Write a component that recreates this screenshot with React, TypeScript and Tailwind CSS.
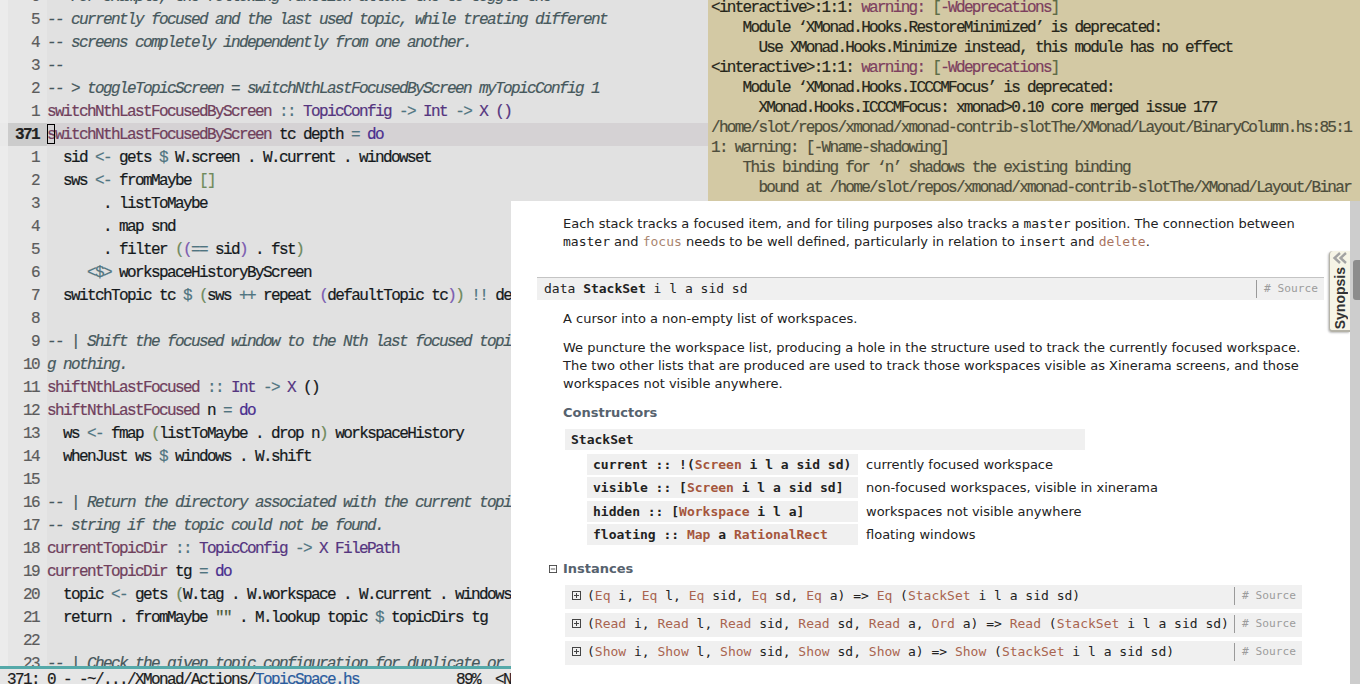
import React from "react";

// token styles for the editor
const C = "italic text-[#46585c]";
const F = "text-[#70405c]";
const T = "text-[#55357f]";
const K = "text-[#4a2f8f]";
const O = "text-[#4f7480]";
const G = "text-[#6f8a5c]";
const P = "text-[#7b5bb0]";
const D = "";

type Tok = [string, string];
type Line = { n: string; toks: Tok[]; current?: boolean };

const lines: Line[] = [
    { n: "6", toks: [["-- For example, the following function allows the to toggle the", C]] },
    { n: "5", toks: [["-- currently focused and the last used topic, while treating different", C]] },
    { n: "4", toks: [["-- screens completely independently from one another.", C]] },
    { n: "3", toks: [["--", C]] },
    { n: "2", toks: [["-- > toggleTopicScreen = switchNthLastFocusedByScreen myTopicConfig 1", C]] },
    { n: "1", toks: [["switchNthLastFocusedByScreen", F], [" :: ", O], ["TopicConfig", T], [" -> ", O], ["Int", T], [" -> ", O], ["X ()", T]] },
    { n: "371", current: true, toks: [["switchNthLastFocusedByScreen", F], [" tc depth ", D], ["=", O], [" ", D], ["do", K]] },
    { n: "1", toks: [["  sid ", D], ["<-", O], [" gets ", D], ["$", O], [" W.screen . W.current . windowset", D]] },
    { n: "2", toks: [["  sws ", D], ["<-", O], [" fromMaybe ", D], ["[]", G]] },
    { n: "3", toks: [["       . listToMaybe", D]] },
    { n: "4", toks: [["       . map snd", D]] },
    { n: "5", toks: [["       . filter ", D], ["(", G], ["(", P], ["== ", O], ["sid", D], [")", P], [" . fst", D], [")", G]] },
    { n: "6", toks: [["     ", D], ["<$>", O], [" workspaceHistoryByScreen", D]] },
    { n: "7", toks: [["  switchTopic tc ", D], ["$", O], [" ", D], ["(", G], ["sws ", D], ["++", O], [" repeat ", D], ["(", P], ["defaultTopic tc", D], [")", P], [")", G], [" ", D], ["!!", O], [" depth", D]] },
    { n: "8", toks: [] },
    { n: "9", toks: [["-- | Shift the focused window to the Nth last focused topic, or do", C]] },
    { n: "10", toks: [["g nothing.", C]] },
    { n: "11", toks: [["shiftNthLastFocused", F], [" :: ", O], ["Int", T], [" -> ", O], ["X ", T], ["()", D]] },
    { n: "12", toks: [["shiftNthLastFocused", F], [" n ", D], ["=", O], [" ", D], ["do", K]] },
    { n: "13", toks: [["  ws ", D], ["<-", O], [" fmap ", D], ["(", G], ["listToMaybe . drop n", D], [")", G], [" workspaceHistory", D]] },
    { n: "14", toks: [["  whenJust ws ", D], ["$", O], [" windows . W.shift", D]] },
    { n: "15", toks: [] },
    { n: "16", toks: [["-- | Return the directory associated with the current topic, or an empty", C]] },
    { n: "17", toks: [["-- string if the topic could not be found.", C]] },
    { n: "18", toks: [["currentTopicDir", F], [" :: ", O], ["TopicConfig", T], [" -> ", O], ["X ", T], ["FilePath", T]] },
    { n: "19", toks: [["currentTopicDir", F], [" tg ", D], ["=", O], [" ", D], ["do", K]] },
    { n: "20", toks: [["  topic ", D], ["<-", O], [" gets ", D], ["(", G], ["W.tag . W.workspace . W.current . windowset", D], [")", G]] },
    { n: "21", toks: [["  return . fromMaybe ", D], ['""', "text-[#4a5a3a]"], [" . M.lookup topic ", D], ["$", O], [" topicDirs tg", D]] },
    { n: "22", toks: [] },
    { n: "23", toks: [["-- | Check the given topic configuration for duplicate or", C]] },
];

const W = "text-[#7d3f5e]";
const Q = "text-[#5d6b45]";
const L = "text-[#4d4d3b]";

const ghci: Tok[][] = [
    [["<interactive>:1:1: ", D], ["warning:", W], [" ", D], ["[", Q], ["-Wdeprecations", W], ["]", Q]],
    [["    Module ‘XMonad.Hooks.RestoreMinimized’ is deprecated:", D]],
    [["      Use XMonad.Hooks.Minimize instead, this module has no effect", D]],
    [["<interactive>:1:1: ", D], ["warning:", W], [" ", D], ["[", Q], ["-Wdeprecations", W], ["]", Q]],
    [["    Module ‘XMonad.Hooks.ICCCMFocus’ is deprecated:", D]],
    [["      XMonad.Hooks.ICCCMFocus: xmonad>0.10 core merged issue 177", D]],
    [["/home/slot/repos/xmonad/xmonad-contrib-slotThe/XMonad/Layout/BinaryColumn.hs:85:1", L]],
    [["1: warning: [-Wname-shadowing]", L]],
    [["    This binding for ‘n’ shadows the existing binding", L]],
    [["      bound at /home/slot/repos/xmonad/xmonad-contrib-slotThe/XMonad/Layout/Binar", L]],
];

const Toks = ({ toks }: { toks: Tok[] }) => (
    <>
        {toks.map(([text, cls], i) => (
            <span key={i} className={cls}>
                {text}
            </span>
        ))}
    </>
);

const CodeRow = ({ line }: { line: Line }) => (
    <div className={`relative flex h-[23px] items-center ${line.current ? "bg-[#d5d2d4]" : ""}`}>
        <div className={`h-full w-[8px] shrink-0 ${line.current ? "bg-[#e9e9e9]" : ""}`} />
        <div
            className={`flex h-full w-[39px] shrink-0 items-center justify-end pr-[8px] ${
                line.current ? "bg-[#cccccc] font-bold text-[#222]" : "text-[#5c5c5c]"
            }`}
        >
            {line.n}
        </div>
        <div className="whitespace-pre text-[#15191c]">
            <Toks toks={line.toks} />
        </div>
        {line.current && <div className="absolute top-[1px] left-[47px] h-[20px] w-[8px] border border-black" />}
    </div>
);

const Source = () => (
    <div className="flex h-[18px] items-center border-l border-[#9a9a9a] pr-[6px] pl-[7px] font-['DejaVu_Sans_Mono',monospace] text-[11.2px] text-[#9c9c9c]">
        # Source
    </div>
);

const Mono = "font-['DejaVu_Sans_Mono',monospace] text-[13px] whitespace-pre";
const TL = "text-[#a5563c]";
const TI = "text-[#a9644f]";

const fields: { toks: Tok[]; doc: string; extra: string }[] = [
    { toks: [["current :: !(", D], ["Screen", TL], [" i l a sid sd)", D]], doc: "currently focused workspace", extra: "" },
    { toks: [["visible :: [", D], ["Screen", TL], [" i l a sid sd]", D]], doc: "non-focused workspaces, visible in xinerama", extra: "" },
    { toks: [["hidden :: [", D], ["Workspace", TL], [" i l a]", D]], doc: "workspaces not visible anywhere", extra: "mt-[1px]" },
    { toks: [["floating :: ", D], ["Map", TL], [" a ", D], ["RationalRect", TL]], doc: "floating windows", extra: "" },
];

const inst = (c: string, last: Tok[]): Tok[] => [
    ["(", D], [c, TI], [" i, ", D], [c, TI], [" l, ", D], [c, TI], [" sid, ", D], [c, TI], [" sd, ", D], [c, TI], [" a", D], ...last,
];

const instances: Tok[][] = [
    [...inst("Eq", []), [") => ", D], ["Eq", TI], [" (", D], ["StackSet", TI], [" i l a sid sd)", D]],
    [...inst("Read", [[", ", D], ["Ord", TI], [" a", D]]), [") => ", D], ["Read", TI], [" (", D], ["StackSet", TI], [" i l a sid sd)", D]],
    [...inst("Show", []), [") => ", D], ["Show", TI], [" (", D], ["StackSet", TI], [" i l a sid sd)", D]],
];

const Box = ({ plus, className }: { plus?: boolean; className: string }) => (
    <svg viewBox="0 0 9 9" className={className} fill="none" stroke="#444" strokeWidth="1">
        <rect x="0.5" y="0.5" width="8" height="8" />
        <path d="M2 4.5h5" />
        {plus && <path d="M4.5 2v5" />}
    </svg>
);

const M = ({ children }: { children: React.ReactNode }) => (
    <span className="font-['DejaVu_Sans_Mono',monospace] text-[13px]">{children}</span>
);

const App: React.FC = () => {
    return (
        <div className="relative h-[684px] w-[1360px] overflow-hidden bg-[#e1e1e1] font-['Liberation_Mono',monospace] text-[16px] tracking-[-1.6px] [-webkit-text-stroke:0.2px]">
            {/* emacs */}
            <div className="absolute top-0 left-0 flex h-[684px] w-[708px] flex-col bg-[#e1e1e1]">
                <div className="relative flex-1 overflow-hidden bg-[linear-gradient(to_right,#ececec_0,#ececec_8px,#e6e6e6_8px,#e6e6e6_47px,#e1e1e1_47px)]">
                    <div className="-mt-[15px] flex flex-col">
                        {lines.map((line, i) => (
                            <CodeRow key={i} line={line} />
                        ))}
                    </div>
                </div>
                <div className="h-[18px] shrink-0 overflow-hidden border-t-[3px] border-[#55a9a9] bg-[#e6e6e6]">
                    <div className="mt-[1px] flex h-[20px] w-[511px] items-center whitespace-pre pl-[7px] text-[#1c1c1c]">
                        <span>371: 0 - -~/.../XMonad/Actions/</span>
                        <span className="text-[#2b5c9e]">TopicSpace.hs</span>
                        <span className="ml-auto">89%</span>
                        <span className="ml-[15px]">{"<N"}</span>
                    </div>
                </div>
            </div>

            {/* ghci */}
            <div className="absolute top-0 left-[708px] flex h-[201px] w-[652px] flex-col overflow-hidden bg-[#d3c9a4] pl-[3px] text-[#26261a] tracking-[-1.7px]">
                <div className="-mt-[2px] flex flex-col">
                    {ghci.map((toks, i) => (
                        <div key={i} className="flex h-[20px] items-center whitespace-pre">
                            <Toks toks={toks} />
                        </div>
                    ))}
                </div>
            </div>

            {/* haddock page */}
            <div className="absolute top-[201px] left-[511px] flex h-[483px] w-[839px] flex-col bg-white font-['DejaVu_Sans',sans-serif] text-[13px] leading-[18px] tracking-normal text-[#222] [-webkit-text-stroke:0px]">
                <div className="mt-[14px] ml-[52px] whitespace-nowrap">
                    <div>
                        Each stack tracks a focused item, and for tiling purposes also tracks a <M>master</M> position. The connection between
                    </div>
                    <div>
                        <M>master</M> and <M><span className="text-[#a9846f]">focus</span></M> needs to be well defined, particularly in relation to <M>insert</M> and{" "}
                        <M><span className="text-[#a9745f]">delete</span></M>.
                    </div>
                </div>

                <div className="mt-[26px] ml-[26px] flex h-[23px] w-[787px] items-center border-t border-[#c4c4c4] bg-[#f0f0f0] pl-[7px]">
                    <span className={Mono}>
                        data <b>StackSet</b> i l a sid sd
                    </span>
                    <div className="ml-auto">
                        <Source />
                    </div>
                </div>

                <div className="mt-[10px] ml-[52px]">A cursor into a non-empty list of workspaces.</div>

                <div className="mt-[11px] ml-[52px] whitespace-nowrap">
                    <div>We puncture the workspace list, producing a hole in the structure used to track the currently focused workspace.</div>
                    <div>The two other lists that are produced are used to track those workspaces visible as Xinerama screens, and those</div>
                    <div>workspaces not visible anywhere.</div>
                </div>

                <div className="mt-[11px] ml-[52px] font-bold text-[#56626e]">Constructors</div>

                <div className={`mt-[7px] ml-[54px] flex h-[21px] w-[520px] items-center bg-[#f0f0f0] pl-[6px] font-bold ${Mono}`}>StackSet</div>

                <div className="mt-[4px] ml-[76px] flex flex-col gap-[2px]">
                    {fields.map((f, i) => (
                        <div key={i} className={`flex h-[21px] items-center gap-[8px] ${f.extra}`}>
                            <div className={`flex h-full w-[271px] items-center bg-[#f0f0f0] pl-[6px] font-bold ${Mono}`}>
                                <Toks toks={f.toks} />
                            </div>
                            <div>{f.doc}</div>
                        </div>
                    ))}
                </div>

                <div className="mt-[15px] ml-[38px] flex items-center gap-[6px] font-bold text-[#56626e]">
                    <Box className="h-[8px] w-[8px]" />
                    Instances
                </div>

                <div className="mt-[7px] ml-[54px] flex w-[737px] flex-col gap-[4px]">
                    {instances.map((toks, i) => (
                        <div key={i} className="flex h-[24px] items-center bg-[#f0f0f0] pb-[3px] pl-[7px]">
                            <Box plus className="mr-[6px] h-[9px] w-[9px] shrink-0" />
                            <span className={Mono}>
                                <Toks toks={toks} />
                            </span>
                            <div className="ml-auto">
                                <Source />
                            </div>
                        </div>
                    ))}
                </div>

                {/* synopsis tab */}
                <div className="absolute top-[50px] right-0 flex h-[81px] w-[21px] flex-col items-center rounded-l-[4px] border-b-2 border-l border-[#b5b3a8] bg-[#f6f4e6] shadow-[-1px_1px_2px_rgba(0,0,0,0.25)]">
                    <svg viewBox="0 0 16 12" className="mt-[1px] h-[12px] w-[16px]" fill="none" stroke="#a3a3a3" strokeWidth="2.4">
                        <path d="M8 1 2.5 6 8 11" />
                        <path d="M14 1 8.5 6 14 11" />
                    </svg>
                    <span className="mt-[3px] rotate-180 font-['Liberation_Sans',sans-serif] text-[14px] leading-[18px] font-bold text-[#333] [writing-mode:vertical-rl]">
                        Synopsis
                    </span>
                </div>
            </div>

            {/* scrollbar */}
            <div className="absolute top-[201px] left-[1350px] h-[483px] w-[10px] bg-[#cdcdcd]">
                <div className="mt-[59px] ml-[3px] h-[40px] w-[7px] rounded-l-[3px] bg-[#8c8c8c]" />
            </div>
        </div>
    );
};

export default App;
